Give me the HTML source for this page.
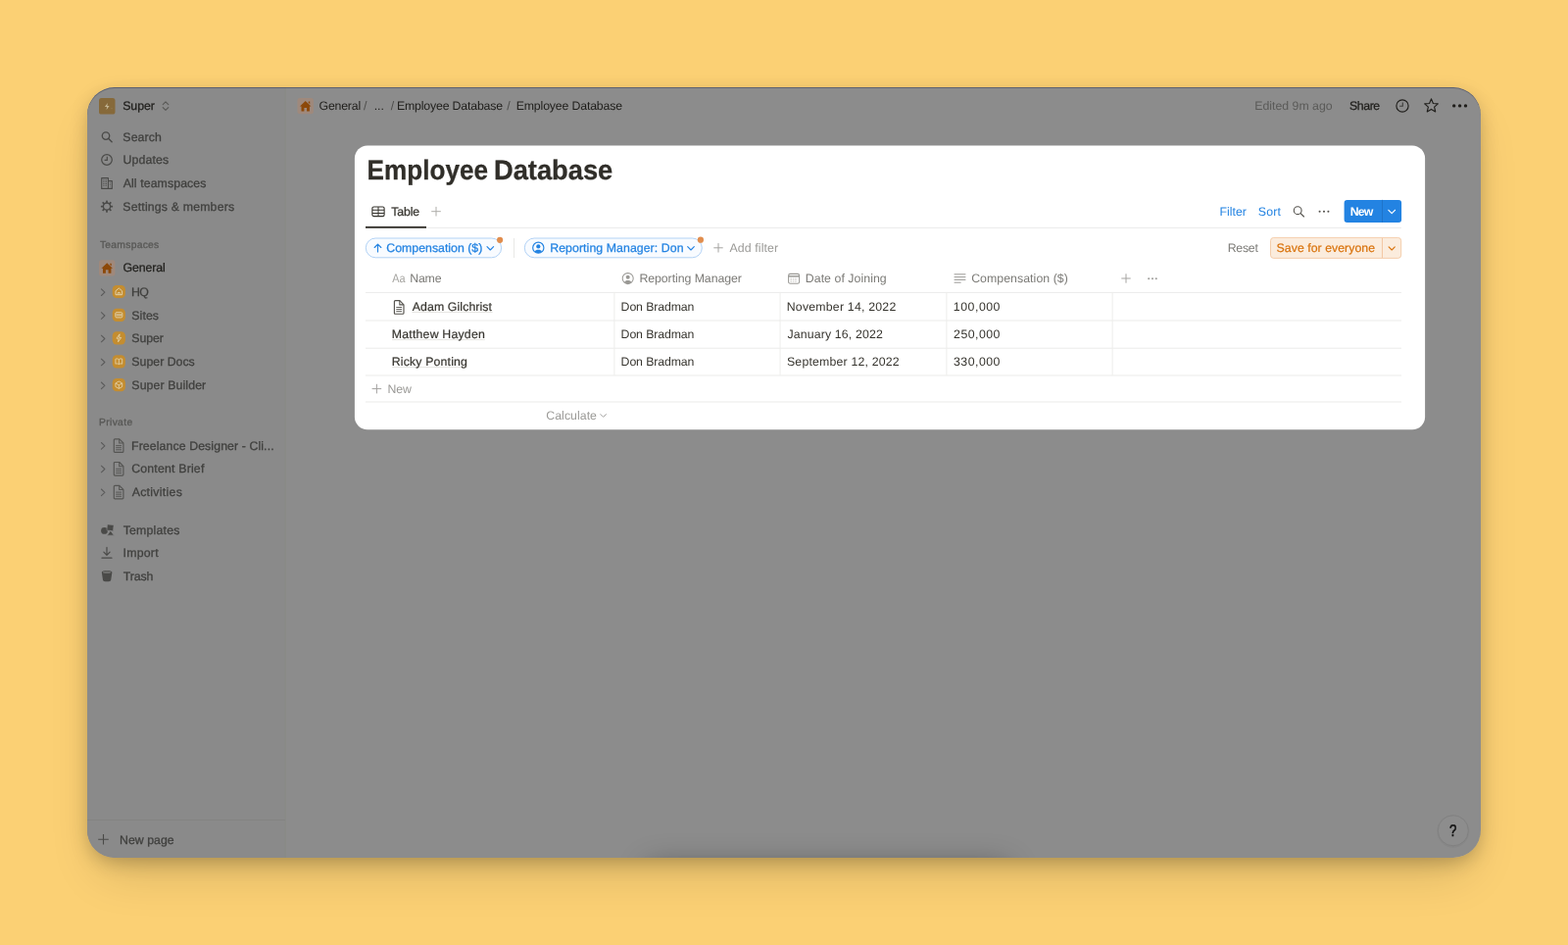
<!DOCTYPE html>
<html lang="en"><head><meta charset="utf-8"><title>Employee Database</title>
<style>
*{margin:0;padding:0;box-sizing:content-box}
h1{font-size:inherit;font-weight:inherit}
html,body{width:1600px;height:964px;overflow:hidden}
body{position:relative;background:#fbd074;font-family:"Liberation Sans", sans-serif;-webkit-font-smoothing:antialiased}
.win{position:absolute;left:89px;top:89px;width:1422px;height:786px;border-radius:28px;background:#8c8c8c;overflow:hidden}
.shadow{position:absolute;left:89px;top:89px;width:1422px;height:786px;border-radius:28px;box-shadow:0 6px 20px -3px rgba(0,0,0,.25),0 25px 50px -12px rgba(0,0,0,.155)}
.side{position:absolute;left:0;top:0;width:201px;height:786px;background:#8a8a8a;border-right:2px solid #898a87}
.sline{position:absolute;left:0;top:746.5px;width:202px;height:1px;background:#838382}
.toast{position:absolute;left:574px;top:796px;width:364px;height:40px;border-radius:6px;box-shadow:0 0 30px 2px rgba(0,0,0,.36)}
.topline{position:absolute;left:0;top:0;width:1422px;height:786px;border-radius:28px;box-shadow:inset 0 1px 0 rgba(55,62,90,.55)}

.ov{position:absolute;left:0;top:0;pointer-events:none}
.layer{position:absolute;left:0;top:0;width:1600px;height:964px;will-change:transform}
.t{position:absolute;white-space:pre;line-height:20px;height:20px;text-rendering:geometricPrecision}
</style></head>
<body>
<div class="shadow"></div>
<div class="layer">
<div class="win">
<div class="side"></div>
<div class="sline"></div>
<div class="toast"></div>
<div class="topline"></div>
</div>
<svg class="ov" width="1600" height="964" viewBox="0 0 1600 964" aria-hidden="true">
<rect x="101" y="100" width="16.5" height="16.5" rx="2.6" fill="#86693a"/>
<g transform="translate(105.60 104.40)"><path d="M4.3 0.5 L1.3 4.5 H3.5 L3.0 7.7 L6.0 3.7 H3.8 Z" fill="#c3b594"/><circle cx="8.4" cy="6.3" r="0.45" fill="#a89a78"/></g>
<g transform="translate(164.00 102.00)"><path d="M2.2 4.6 L5 1.8 L7.8 4.6 M2.2 7.6 L5 10.4 L7.8 7.6" fill="none" stroke="#585856" stroke-width="1.1" stroke-linecap="round" stroke-linejoin="round"/></g>
<g transform="translate(102.40 133.00)"><circle cx="5.6" cy="5.6" r="3.7" fill="none" stroke="#4a4a48" stroke-width="1.35"/><path d="M8.4 8.4 L11.7 11.7" stroke="#4a4a48" stroke-width="1.45" stroke-linecap="round"/></g>
<g transform="translate(102.00 156.00)"><circle cx="7" cy="7" r="5.3" fill="none" stroke="#4a4a48" stroke-width="1.2"/><path d="M7.3 3.8 V7.3 H4.6" fill="none" stroke="#4a4a48" stroke-width="1.2"/></g>
<g transform="translate(102.00 180.00)"><path d="M1.7 1.6 H8.4 V12.4 H1.7 Z M8.4 4.6 H12.3 V12.4 H8.4" fill="none" stroke="#4a4a48" stroke-width="1.1" stroke-linejoin="round"/><path d="M3.7 3.4 V10 M5.1 3.4 V10 M6.5 3.4 V10 M10.3 6.4 V10.4" stroke="#4a4a48" stroke-width="0.8" stroke-dasharray="1 0.8"/></g>
<g transform="translate(102.00 203.60)"><circle cx="7" cy="7" r="3.6" fill="none" stroke="#4a4a48" stroke-width="1.3"/><rect x="6.1" y="0.9" width="1.8" height="2.6" rx="0.5" fill="#4a4a48" transform="rotate(0 7 7)"/><rect x="6.1" y="0.9" width="1.8" height="2.6" rx="0.5" fill="#4a4a48" transform="rotate(45 7 7)"/><rect x="6.1" y="0.9" width="1.8" height="2.6" rx="0.5" fill="#4a4a48" transform="rotate(90 7 7)"/><rect x="6.1" y="0.9" width="1.8" height="2.6" rx="0.5" fill="#4a4a48" transform="rotate(135 7 7)"/><rect x="6.1" y="0.9" width="1.8" height="2.6" rx="0.5" fill="#4a4a48" transform="rotate(180 7 7)"/><rect x="6.1" y="0.9" width="1.8" height="2.6" rx="0.5" fill="#4a4a48" transform="rotate(225 7 7)"/><rect x="6.1" y="0.9" width="1.8" height="2.6" rx="0.5" fill="#4a4a48" transform="rotate(270 7 7)"/><rect x="6.1" y="0.9" width="1.8" height="2.6" rx="0.5" fill="#4a4a48" transform="rotate(315 7 7)"/></g>
<rect x="101" y="265.2" width="16.4" height="16.2" rx="2.6" fill="#9f897c"/><g transform="translate(103.00 267.50) scale(1.1071 1.1028)"><path d="M5.6 0.6 L0.4 5.6 H1.8 V10.2 H4.4 V7 H6.8 V10.2 H9.4 V5.6 H10.8 Z" fill="#8c4809"/><path d="M8.4 1.2 H9.7 V3.4 L8.4 2.4 Z" fill="#8c4809"/></g>
<g transform="translate(101.00 293.20)"><path d="M2.4 1.7 L5.9 5 L2.4 8.3" fill="none" stroke="#5a5a5a" stroke-width="1.05" stroke-linecap="round" stroke-linejoin="round"/></g>
<g transform="translate(114.70 290.90)"><rect x="0" y="0" width="13.2" height="13.2" rx="4.3" fill="#c48d30"/><path d="M6.6 3.1 L3.3 5.9 V9.8 H9.9 V5.9 Z" fill="none" stroke="#e2d0a6" stroke-width="1" stroke-linejoin="round"/><path d="M5.6 9.6 V7.6 H7.6 V9.6" fill="none" stroke="#e2d0a6" stroke-width="0.9"/></g>
<g transform="translate(101.00 317.00)"><path d="M2.4 1.7 L5.9 5 L2.4 8.3" fill="none" stroke="#5a5a5a" stroke-width="1.05" stroke-linecap="round" stroke-linejoin="round"/></g>
<g transform="translate(114.70 314.70)"><rect x="0" y="0" width="13.2" height="13.2" rx="4.3" fill="#c48d30"/><rect x="3.1" y="4" width="7" height="5.2" rx="1.1" fill="none" stroke="#e2d0a6" stroke-width="1"/><rect x="3.6" y="5.6" width="6" height="2" fill="#d4bf92"/></g>
<g transform="translate(101.00 340.50)"><path d="M2.4 1.7 L5.9 5 L2.4 8.3" fill="none" stroke="#5a5a5a" stroke-width="1.05" stroke-linecap="round" stroke-linejoin="round"/></g>
<g transform="translate(114.70 338.20)"><rect x="0" y="0" width="13.2" height="13.2" rx="4.3" fill="#c48d30"/><path d="M7.4 2.6 L4.2 7 H6.4 L5.8 10.6 L9 6.2 H6.8 Z" fill="none" stroke="#e2d0a6" stroke-width="0.9" stroke-linejoin="round"/></g>
<g transform="translate(101.00 364.50)"><path d="M2.4 1.7 L5.9 5 L2.4 8.3" fill="none" stroke="#5a5a5a" stroke-width="1.05" stroke-linecap="round" stroke-linejoin="round"/></g>
<g transform="translate(114.70 362.20)"><rect x="0" y="0" width="13.2" height="13.2" rx="4.3" fill="#c48d30"/><path d="M6.6 4.4 C5.4 3.6 4.2 3.6 3.2 4 V9 C4.2 8.6 5.4 8.6 6.6 9.4 C7.8 8.6 9 8.6 10 9 V4 C9 3.6 7.8 3.6 6.6 4.4 Z M6.6 4.4 V9.4" fill="none" stroke="#e2d0a6" stroke-width="0.9" stroke-linejoin="round"/></g>
<g transform="translate(101.00 388.30)"><path d="M2.4 1.7 L5.9 5 L2.4 8.3" fill="none" stroke="#5a5a5a" stroke-width="1.05" stroke-linecap="round" stroke-linejoin="round"/></g>
<g transform="translate(114.70 386.00)"><rect x="0" y="0" width="13.2" height="13.2" rx="4.3" fill="#c48d30"/><path d="M6.6 3 L10 4.9 V8.5 L6.6 10.4 L3.2 8.5 V4.9 Z M3.3 5 L6.6 6.8 L9.9 5 M6.6 6.8 V10.3" fill="none" stroke="#e2d0a6" stroke-width="0.9" stroke-linejoin="round"/></g>
<g transform="translate(101.00 449.80)"><path d="M2.4 1.7 L5.9 5 L2.4 8.3" fill="none" stroke="#5a5a5a" stroke-width="1.05" stroke-linecap="round" stroke-linejoin="round"/></g>
<g transform="translate(114.80 446.90)"><path d="M1.5 1.9 Q1.5 0.9 2.5 0.9 H7.0 L11.1 5.0 V13.5 Q11.1 14.5 10.1 14.5 H2.5 Q1.5 14.5 1.5 13.5 Z" fill="none" stroke="#555553" stroke-width="1.15" stroke-linejoin="round"/>
<path d="M6.9 1.0 V5.1 H11.0" fill="none" stroke="#555553" stroke-width="1.05"/>
<path d="M3.4 7.7 H9.2 M3.4 9.8 H9.2 M3.4 11.9 H9.2" stroke="#555553" stroke-width="0.95"/></g>
<g transform="translate(101.00 473.50)"><path d="M2.4 1.7 L5.9 5 L2.4 8.3" fill="none" stroke="#5a5a5a" stroke-width="1.05" stroke-linecap="round" stroke-linejoin="round"/></g>
<g transform="translate(114.80 470.60)"><path d="M1.5 1.9 Q1.5 0.9 2.5 0.9 H7.0 L11.1 5.0 V13.5 Q11.1 14.5 10.1 14.5 H2.5 Q1.5 14.5 1.5 13.5 Z" fill="none" stroke="#555553" stroke-width="1.15" stroke-linejoin="round"/>
<path d="M6.9 1.0 V5.1 H11.0" fill="none" stroke="#555553" stroke-width="1.05"/>
<path d="M3.4 7.7 H9.2 M3.4 9.8 H9.2 M3.4 11.9 H9.2" stroke="#555553" stroke-width="0.95"/></g>
<g transform="translate(101.00 497.30)"><path d="M2.4 1.7 L5.9 5 L2.4 8.3" fill="none" stroke="#5a5a5a" stroke-width="1.05" stroke-linecap="round" stroke-linejoin="round"/></g>
<g transform="translate(114.80 494.40)"><path d="M1.5 1.9 Q1.5 0.9 2.5 0.9 H7.0 L11.1 5.0 V13.5 Q11.1 14.5 10.1 14.5 H2.5 Q1.5 14.5 1.5 13.5 Z" fill="none" stroke="#555553" stroke-width="1.15" stroke-linejoin="round"/>
<path d="M6.9 1.0 V5.1 H11.0" fill="none" stroke="#555553" stroke-width="1.05"/>
<path d="M3.4 7.7 H9.2 M3.4 9.8 H9.2 M3.4 11.9 H9.2" stroke="#555553" stroke-width="0.95"/></g>
<g transform="translate(102.00 533.60)"><circle cx="4.5" cy="7.8" r="3.4" fill="#4a4a48"/><rect x="7.2" y="1.6" width="6.6" height="6.2" rx="0.6" fill="#4a4a48" stroke="#8a8a8a" stroke-width="0.6" transform="rotate(6 10.5 4.7)"/><path d="M10.8 7.6 L14.4 12.6 H7.2 Z" fill="#4a4a48" stroke="#8a8a8a" stroke-width="0.8"/></g>
<g transform="translate(102.00 557.00)"><path d="M7 1.4 V9 M3.9 6.2 L7 9.3 L10.1 6.2 M2 12.2 H12" fill="none" stroke="#4a4a48" stroke-width="1.2" stroke-linecap="round" stroke-linejoin="round"/></g>
<g transform="translate(102.00 580.60)"><path d="M1.8 3.2 C1.8 0.7 12.4 0.7 12.4 3.2 L11.2 11.2 C11 13.2 3.2 13.2 3 11.2 Z" fill="#4a4a48"/><ellipse cx="7.1" cy="3.2" rx="4.2" ry="1.25" fill="#6e6e6c"/></g>
<g transform="translate(97.50 848.30)"><path d="M8 2.7 V13.3 M2.7 8 H13.3" fill="none" stroke="#4a4a48" stroke-width="1.1" stroke-linecap="butt"/></g>
<rect x="303.5" y="100" width="16.4" height="16.2" rx="2.6" fill="#9f897c"/><g transform="translate(305.50 102.30) scale(1.1071 1.1028)"><path d="M5.6 0.6 L0.4 5.6 H1.8 V10.2 H4.4 V7 H6.8 V10.2 H9.4 V5.6 H10.8 Z" fill="#8c4809"/><path d="M8.4 1.2 H9.7 V3.4 L8.4 2.4 Z" fill="#8c4809"/></g>
<g transform="translate(1423.00 100.00)"><circle cx="8" cy="8" r="6.1" fill="none" stroke="#1f1e1b" stroke-width="1.15"/><path d="M8.3 4.6 V8.2 H5.2" fill="none" stroke="#3c3c3a" stroke-width="1.1"/></g>
<g transform="translate(1452.50 99.60)"><path d="M8 1.3 L9.9 5.9 L14.8 6.3 L11.1 9.5 L12.2 14.3 L8 11.8 L3.8 14.3 L4.9 9.5 L1.2 6.3 L6.1 5.9 Z" fill="none" stroke="#1f1e1b" stroke-width="1.15" stroke-linejoin="round"/></g>
<g transform="translate(1481.60 103.90)"><circle cx="2.0999999999999996" cy="4" r="1.7" fill="#1f1e1b"/><circle cx="8.0" cy="4" r="1.7" fill="#1f1e1b"/><circle cx="13.9" cy="4" r="1.7" fill="#1f1e1b"/></g>
<circle cx="1482.8" cy="848.1" r="16.6" fill="rgba(0,0,0,.035)"/><circle cx="1482.8" cy="847.3" r="15.5" fill="#8d8d8d" stroke="#7c7c7c" stroke-width="0.7"/>
<rect x="361.9" y="148.45" width="1092.2" height="289.8" rx="13" fill="#fff"/>
<g transform="translate(379.00 210.00)"><rect x="0.9" y="1" width="12.2" height="9.6" rx="1.6" fill="none" stroke="#37352f" stroke-width="1.15"/><path d="M1 4.2 H13 M1 7.4 H13 M7 1 V10.6" stroke="#37352f" stroke-width="1.05"/></g>
<g transform="translate(437.00 207.70)"><path d="M8 3.2 V12.8 M3.2 8 H12.8" fill="none" stroke="#aeada9" stroke-width="1.0" stroke-linecap="butt"/></g>
<rect x="373" y="231.9" width="1057" height="1" fill="#ececea"/><rect x="373" y="230.9" width="62" height="1.9" fill="#37352f"/>
<g transform="translate(1318.60 209.30)"><circle cx="5.6" cy="5.4" r="3.9" fill="none" stroke="#55534e" stroke-width="1.1"/><path d="M8.5 8.3 L11.9 11.7" stroke="#55534e" stroke-width="1.15" stroke-linecap="round"/></g>
<g transform="translate(1343.00 211.80)"><circle cx="3.5999999999999996" cy="4" r="1.05" fill="#55534e"/><circle cx="8.0" cy="4" r="1.05" fill="#55534e"/><circle cx="12.4" cy="4" r="1.05" fill="#55534e"/></g>
<rect x="1371.6" y="203.9" width="58.5" height="23.0" rx="3" fill="#2383e2"/>
<rect x="1410" y="203.9" width="1" height="23" fill="#1f74c9"/>
<g transform="translate(1414.20 211.00)"><path d="M2.7 3.3 L6 6.7 L9.3 3.3" fill="none" stroke="#ffffff" stroke-width="1.2" stroke-linecap="round" stroke-linejoin="round"/></g>
<rect x="373.3" y="243.0" width="138.3" height="19.8" rx="9.9" fill="#f8fbff" stroke="#a9cdf4" stroke-width="0.9"/><rect x="535.3" y="243.0" width="181" height="19.8" rx="9.9" fill="#f8fbff" stroke="#a9cdf4" stroke-width="0.9"/>
<g transform="translate(380.00 247.50)"><path d="M5.5 9.4 V1.9 M2.2 5 L5.5 1.7 L8.8 5" fill="none" stroke="#2383e2" stroke-width="1.15" stroke-linecap="round" stroke-linejoin="round"/></g>
<g transform="translate(494.30 248.30)"><path d="M2.7 3.3 L6 6.7 L9.3 3.3" fill="none" stroke="#2383e2" stroke-width="1.15" stroke-linecap="round" stroke-linejoin="round"/></g>
<circle cx="510.1" cy="244.8" r="3.1" fill="#e18d4d"/>
<rect x="524" y="243" width="1" height="20" fill="#e8e8e6"/>
<g transform="translate(542.80 246.20)"><circle cx="6.5" cy="6.5" r="5.6" fill="none" stroke="#2383e2" stroke-width="1.15"/><circle cx="6.5" cy="5.2" r="2.1" fill="#2383e2"/><path d="M2.9 10.4 C3.6 7.9 9.4 7.9 10.1 10.4 C8.3 12.4 4.7 12.4 2.9 10.4 Z" fill="#2383e2"/></g>
<g transform="translate(699.00 248.30)"><path d="M2.7 3.3 L6 6.7 L9.3 3.3" fill="none" stroke="#2383e2" stroke-width="1.15" stroke-linecap="round" stroke-linejoin="round"/></g>
<circle cx="714.9" cy="244.7" r="3.1" fill="#e18d4d"/>
<g transform="translate(725.00 244.80)"><path d="M8 3.3 V12.7 M3.3 8 H12.7" fill="none" stroke="#a4a3a0" stroke-width="1.0" stroke-linecap="butt"/></g>
<rect x="1296.5" y="242.4" width="133.2" height="21.0" rx="3.2" fill="#fbecdd" stroke="#f3c8a4" stroke-width="0.9"/>
<rect x="1410" y="242.8" width="1" height="20.2" fill="#f3c8a4"/>
<g transform="translate(1414.20 248.40)"><path d="M2.9 3.4 L6 6.6 L9.1 3.4" fill="none" stroke="#d9730d" stroke-width="1.1" stroke-linecap="round" stroke-linejoin="round"/></g>
<g transform="translate(634.20 277.60)"><circle cx="6.5" cy="6.5" r="5.5" fill="none" stroke="#9a9995" stroke-width="1.05"/><circle cx="6.5" cy="5.2" r="2" fill="#9a9995"/><path d="M3 10.3 C3.7 7.9 9.3 7.9 10 10.3 C8.3 12.2 4.7 12.2 3 10.3 Z" fill="#9a9995"/></g>
<g transform="translate(803.70 277.90)"><rect x="0.9" y="1.5" width="11.0" height="9.8" rx="1.8" fill="none" stroke="#9a9995" stroke-width="1.05"/><path d="M1 3.9 H11.8" stroke="#9a9995" stroke-width="1.5"/><path d="M2.8 6.2 H10 M2.8 7.8 H10 M2.8 9.4 H10" stroke="#cfcecb" stroke-width="0.9" stroke-dasharray="1.5 0.8"/></g>
<g transform="translate(973.00 278.00)"><path d="M0.6 1.8 H12.4 M0.6 4.6 H12.4 M0.6 7.4 H12.4 M0.6 10.2 H7.6" stroke="#9a9995" stroke-width="1"/></g>
<g transform="translate(1141.00 276.00)"><path d="M8 3.3 V12.7 M3.3 8 H12.7" fill="none" stroke="#a4a3a0" stroke-width="1.0" stroke-linecap="butt"/></g>
<g transform="translate(1168.00 280.20)"><circle cx="4.2" cy="4" r="1.05" fill="#a09f9c"/><circle cx="8.0" cy="4" r="1.05" fill="#a09f9c"/><circle cx="11.8" cy="4" r="1.05" fill="#a09f9c"/></g>
<rect x="373" y="297.9" width="1057" height="1" fill="#ececea"/><rect x="373" y="326.5" width="1057" height="1" fill="#ececea"/><rect x="373" y="354.7" width="1057" height="1" fill="#ececea"/><rect x="373" y="382.5" width="1057" height="1" fill="#ececea"/><rect x="373" y="409.5" width="1057" height="1" fill="#ececea"/><rect x="626.4" y="298.4" width="1" height="84.4" fill="#ededeb"/><rect x="795.55" y="298.4" width="1" height="84.4" fill="#ededeb"/><rect x="965.4" y="298.4" width="1" height="84.4" fill="#ededeb"/><rect x="1134.6" y="298.4" width="1" height="84.4" fill="#ededeb"/>
<rect x="420.4" y="317.9" width="82.2" height="1.1" fill="#e7e6e3"/>
<rect x="400.1" y="346.0" width="94.7" height="1.1" fill="#e7e6e3"/>
<rect x="400.1" y="374.1" width="76.7" height="1.1" fill="#e7e6e3"/>
<g transform="translate(400.90 305.80)"><path d="M1.5 1.9 Q1.5 0.9 2.5 0.9 H7.0 L11.1 5.0 V13.5 Q11.1 14.5 10.1 14.5 H2.5 Q1.5 14.5 1.5 13.5 Z" fill="none" stroke="#55534e" stroke-width="1.15" stroke-linejoin="round"/>
<path d="M6.9 1.0 V5.1 H11.0" fill="none" stroke="#55534e" stroke-width="1.05"/>
<path d="M3.4 7.7 H9.2 M3.4 9.8 H9.2 M3.4 11.9 H9.2" stroke="#55534e" stroke-width="0.95"/></g>
<g transform="translate(376.40 388.60)"><path d="M8 3.2 V12.8 M3.2 8 H12.8" fill="none" stroke="#a4a3a0" stroke-width="1.0" stroke-linecap="butt"/></g>
<g transform="translate(609.60 419.00)"><path d="M3.2 3.6 L6 6.4 L8.8 3.6" fill="none" stroke="#a4a3a0" stroke-width="1.0" stroke-linecap="round" stroke-linejoin="round"/></g>
</svg>
<nav aria-label="Sidebar">
<span class="t" style="left:125.13px;top:98px;font-size:12.3px;color:#1f1e1b;letter-spacing:0.002px;-webkit-text-stroke:0.25px #1f1e1b">Super</span>
<span class="t" style="left:125.35px;top:130px;font-size:12.3px;color:#3f3f3d;letter-spacing:0.093px;-webkit-text-stroke:0.28px #3f3f3d">Search</span>
<span class="t" style="left:125.53px;top:153px;font-size:12.3px;color:#3f3f3d;letter-spacing:0.156px;-webkit-text-stroke:0.28px #3f3f3d">Updates</span>
<span class="t" style="left:125.67px;top:177px;font-size:12.3px;color:#3f3f3d;letter-spacing:0.110px;-webkit-text-stroke:0.28px #3f3f3d">All teamspaces</span>
<span class="t" style="left:125.35px;top:201px;font-size:12.3px;color:#3f3f3d;letter-spacing:0.177px;-webkit-text-stroke:0.28px #3f3f3d">Settings &amp; members</span>
<span class="t" style="left:101.91px;top:241px;font-size:10.3px;color:#585856;letter-spacing:0.280px;-webkit-text-stroke:0.3px #585856">Teamspaces</span>
<span class="t" style="left:125.58px;top:263px;font-size:12.3px;color:#1f1e1b;letter-spacing:-0.095px;-webkit-text-stroke:0.25px #1f1e1b">General</span>
<span class="t" style="left:134.03px;top:288px;font-size:12.3px;color:#3f3f3d;letter-spacing:-0.526px;-webkit-text-stroke:0.28px #3f3f3d">HQ</span>
<span class="t" style="left:134.35px;top:312px;font-size:12.3px;color:#3f3f3d;letter-spacing:0.066px;-webkit-text-stroke:0.28px #3f3f3d">Sites</span>
<span class="t" style="left:134.35px;top:335px;font-size:12.3px;color:#3f3f3d;letter-spacing:-0.093px;-webkit-text-stroke:0.28px #3f3f3d">Super</span>
<span class="t" style="left:134.35px;top:359px;font-size:12.3px;color:#3f3f3d;letter-spacing:0.017px;-webkit-text-stroke:0.28px #3f3f3d">Super Docs</span>
<span class="t" style="left:134.35px;top:383px;font-size:12.3px;color:#3f3f3d;letter-spacing:0.113px;-webkit-text-stroke:0.28px #3f3f3d">Super Builder</span>
<span class="t" style="left:101.02px;top:422px;font-size:10.3px;color:#585856;letter-spacing:0.344px;-webkit-text-stroke:0.3px #585856">Private</span>
<span class="t" style="left:134.03px;top:445px;font-size:12.3px;color:#3f3f3d;letter-spacing:0.105px;-webkit-text-stroke:0.28px #3f3f3d">Freelance Designer - Cli...</span>
<span class="t" style="left:134.18px;top:468px;font-size:12.3px;color:#3f3f3d;letter-spacing:0.197px;-webkit-text-stroke:0.28px #3f3f3d">Content Brief</span>
<span class="t" style="left:134.67px;top:492px;font-size:12.3px;color:#3f3f3d;letter-spacing:0.293px;-webkit-text-stroke:0.28px #3f3f3d">Activities</span>
<span class="t" style="left:125.70px;top:531px;font-size:12.3px;color:#3f3f3d;letter-spacing:0.200px;-webkit-text-stroke:0.28px #3f3f3d">Templates</span>
<span class="t" style="left:125.59px;top:554px;font-size:12.3px;color:#3f3f3d;letter-spacing:0.236px;-webkit-text-stroke:0.28px #3f3f3d">Import</span>
<span class="t" style="left:125.72px;top:578px;font-size:12.3px;color:#3f3f3d;letter-spacing:-0.061px;-webkit-text-stroke:0.28px #3f3f3d">Trash</span>
<span class="t" style="left:122.09px;top:847px;font-size:12.3px;color:#3f3f3d;letter-spacing:0.022px;-webkit-text-stroke:0.28px #3f3f3d">New page</span>
</nav>
<header>
<span class="t" style="left:325.55px;top:98px;font-size:12.3px;color:#1f1e1b;letter-spacing:-0.189px;">General</span>
<span class="t" style="left:371.11px;top:98px;font-size:12.3px;color:#4e4e4c;">/</span>
<span class="t" style="left:381.63px;top:98px;font-size:12.3px;color:#1f1e1b;letter-spacing:0.017px;">...</span>
<span class="t" style="left:398.70px;top:98px;font-size:12.3px;color:#4e4e4c;">/</span>
<span class="t" style="left:404.98px;top:98px;font-size:12.3px;color:#1f1e1b;letter-spacing:-0.162px;">Employee Database</span>
<span class="t" style="left:517.23px;top:98px;font-size:12.3px;color:#4e4e4c;">/</span>
<span class="t" style="left:526.72px;top:98px;font-size:12.3px;color:#1f1e1b;letter-spacing:-0.148px;">Employee Database</span>
<span class="t" style="left:1280.26px;top:98px;font-size:12.3px;color:#5a5a58;letter-spacing:0.007px;">Edited 9m ago</span>
<span class="t" style="left:1377.02px;top:98px;font-size:12.3px;color:#1f1e1b;letter-spacing:-0.410px;-webkit-text-stroke:0.25px #1f1e1b">Share</span>
</header>
<aside aria-label="Help">
<span class="t" style="left:1478px;top:838px;font-size:17px;color:#121212;transform:translateX(0.966px) scaleX(0.7794);transform-origin:0 50%;-webkit-text-stroke:0.5px #121212">?</span>
</aside>
<h1>
<span class="t" style="left:374px;top:163px;font-size:28.2px;color:#302e29;transform:translateX(0.596px) scaleX(0.9263);transform-origin:0 50%;font-weight:700;-webkit-text-stroke:0.3px #302e29">Employee</span>
<span class="t" style="left:504px;top:163px;font-size:28.2px;color:#302e29;transform:translateX(0.000px) scaleX(0.9674);transform-origin:0 50%;font-weight:700;-webkit-text-stroke:0.3px #302e29">Database</span>
</h1>
<div role="toolbar">
<span class="t" style="left:399.22px;top:206px;font-size:12.3px;color:#37352f;letter-spacing:-0.131px;-webkit-text-stroke:0.25px #37352f">Table</span>
<span class="t" style="left:1244.41px;top:206px;font-size:12.3px;color:#2383e2;letter-spacing:0.040px;">Filter</span>
<span class="t" style="left:1283.82px;top:206px;font-size:12.3px;color:#2383e2;letter-spacing:0.157px;">Sort</span>
<span class="t" style="left:1377.79px;top:206px;font-size:12.3px;color:#ffffff;font-weight:700;letter-spacing:-0.889px;">New</span>
</div>
<div role="group" aria-label="Filters">
<span class="t" style="left:394.34px;top:243px;font-size:12.3px;color:#2383e2;letter-spacing:0.015px;-webkit-text-stroke:0.25px #2383e2">Compensation ($)</span>
<span class="t" style="left:561.23px;top:243px;font-size:12.3px;color:#2383e2;letter-spacing:0.077px;-webkit-text-stroke:0.25px #2383e2">Reporting Manager: Don</span>
<span class="t" style="left:744.50px;top:243px;font-size:12.3px;color:#9b9a97;letter-spacing:0.118px;">Add filter</span>
<span class="t" style="left:1252.75px;top:243px;font-size:12.3px;color:#7d7c78;letter-spacing:-0.262px;">Reset</span>
<span class="t" style="left:1302.59px;top:243px;font-size:12.3px;color:#d9730d;letter-spacing:0.041px;-webkit-text-stroke:0.2px #d9730d">Save for everyone</span>
</div>
<div role="row">
<span class="t" style="left:400px;top:274px;font-size:12.3px;color:#a6a5a1;transform:translateX(0.169px) scaleX(0.8844);transform-origin:0 50%;">Aa</span>
<span class="t" style="left:418.26px;top:274px;font-size:12.3px;color:#7b7a76;letter-spacing:-0.175px;">Name</span>
<span class="t" style="left:652.39px;top:274px;font-size:12.3px;color:#7b7a76;letter-spacing:-0.044px;">Reporting Manager</span>
<span class="t" style="left:821.81px;top:274px;font-size:12.3px;color:#7b7a76;letter-spacing:0.060px;">Date of Joining</span>
<span class="t" style="left:991.17px;top:274px;font-size:12.3px;color:#7b7a76;letter-spacing:0.062px;">Compensation ($)</span>
</div>
<div role="row" aria-rowindex="2">
<span class="t" style="left:420.81px;top:303px;font-size:12.3px;color:#37352f;letter-spacing:0.097px;-webkit-text-stroke:0.2px #37352f">Adam Gilchrist</span>
<span class="t" style="left:633.62px;top:303px;font-size:12.3px;color:#37352f;letter-spacing:-0.110px;">Don Bradman</span>
<span class="t" style="left:802.72px;top:303px;font-size:12.3px;color:#37352f;letter-spacing:0.221px;">November 14, 2022</span>
<span class="t" style="left:972.85px;top:303px;font-size:12.3px;color:#37352f;letter-spacing:0.526px;">100,000</span>
</div>
<div role="row" aria-rowindex="3">
<span class="t" style="left:399.82px;top:331px;font-size:12.3px;color:#37352f;letter-spacing:0.208px;-webkit-text-stroke:0.2px #37352f">Matthew Hayden</span>
<span class="t" style="left:633.62px;top:331px;font-size:12.3px;color:#37352f;letter-spacing:-0.110px;">Don Bradman</span>
<span class="t" style="left:803.42px;top:331px;font-size:12.3px;color:#37352f;letter-spacing:0.152px;">January 16, 2022</span>
<span class="t" style="left:973.08px;top:331px;font-size:12.3px;color:#37352f;letter-spacing:0.488px;">250,000</span>
</div>
<div role="row" aria-rowindex="4">
<span class="t" style="left:399.83px;top:359px;font-size:12.3px;color:#37352f;letter-spacing:0.159px;-webkit-text-stroke:0.2px #37352f">Ricky Ponting</span>
<span class="t" style="left:633.62px;top:359px;font-size:12.3px;color:#37352f;letter-spacing:-0.110px;">Don Bradman</span>
<span class="t" style="left:802.98px;top:359px;font-size:12.3px;color:#37352f;letter-spacing:0.192px;">September 12, 2022</span>
<span class="t" style="left:973.04px;top:359px;font-size:12.3px;color:#37352f;letter-spacing:0.496px;">330,000</span>
</div>
<footer>
<span class="t" style="left:395.39px;top:387px;font-size:12.3px;color:#9b9a97;letter-spacing:-0.044px;">New</span>
<span class="t" style="left:557.29px;top:414px;font-size:12.3px;color:#9b9a97;letter-spacing:0.048px;">Calculate</span>
</footer>
</div>
</body></html>
